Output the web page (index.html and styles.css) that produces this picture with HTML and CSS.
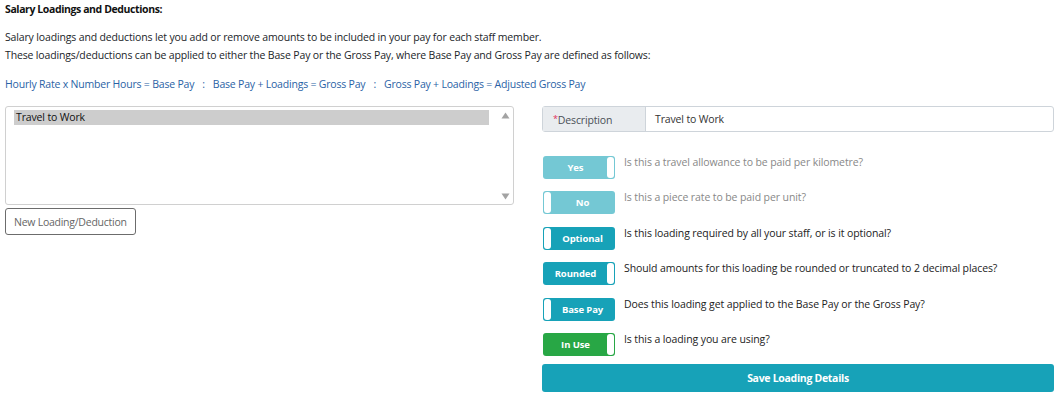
FILE: index.html
```html
<!DOCTYPE html>
<html>
<head>
<meta charset="utf-8">
<link rel="stylesheet" href="styles.css">
</head>
<body>
<div class="page">
  <div class="title">Salary Loadings and Deductions:</div>
  <div class="intro">
    <div>Salary loadings and deductions let you add or remove amounts to be included in your pay for each staff member.</div>
    <div>These loadings/deductions can be applied to either the Base Pay or the Gross Pay, where Base Pay and Gross Pay are defined as follows:</div>
  </div>
  <div class="formula">Hourly Rate x Number Hours = Base Pay<span class="sep">:</span>Base Pay + Loadings = Gross Pay<span class="sep">:</span>Gross Pay + Loadings = Adjusted Gross Pay</div>
  <div class="main">
    <div class="left">
      <div class="listbox">
        <div class="items">
          <div class="item selected">Travel to Work</div>
        </div>
        <div class="scroll">
          <svg width="9" height="7" viewBox="0 0 9 7"><path d="M0.5 6.5 L4.5 0.5 L8.5 6.5 Z" fill="#a3a3a3"/></svg>
          <svg width="9" height="7" viewBox="0 0 9 7"><path d="M0.5 0.5 L4.5 6.5 L8.5 0.5 Z" fill="#a3a3a3"/></svg>
        </div>
      </div>
      <button class="btn-new">New Loading/Deduction</button>
    </div>
    <div class="right">
      <div class="input-group">
        <div class="ig-label"><span class="req">*</span>Description</div>
        <div class="ig-input">Travel to Work</div>
      </div>
      <div class="toggles">
        <div class="row muted">
          <div class="toggle on light"><span class="tlabel">Yes</span><span class="handle"></span></div>
          <div class="q">Is this a travel allowance to be paid per kilometre?</div>
        </div>
        <div class="row muted">
          <div class="toggle off light"><span class="handle"></span><span class="tlabel">No</span></div>
          <div class="q">Is this a piece rate to be paid per unit?</div>
        </div>
        <div class="row">
          <div class="toggle off"><span class="handle"></span><span class="tlabel">Optional</span></div>
          <div class="q">Is this loading required by all your staff, or is it optional?</div>
        </div>
        <div class="row">
          <div class="toggle on"><span class="tlabel">Rounded</span><span class="handle"></span></div>
          <div class="q">Should amounts for this loading be rounded or truncated to 2 decimal places?</div>
        </div>
        <div class="row">
          <div class="toggle off"><span class="handle"></span><span class="tlabel">Base Pay</span></div>
          <div class="q">Does this loading get applied to the Base Pay or the Gross Pay?</div>
        </div>
        <div class="row">
          <div class="toggle on green"><span class="tlabel">In Use</span><span class="handle"></span></div>
          <div class="q">Is this a loading you are using?</div>
        </div>
      </div>
      <button class="btn-save">Save Loading Details</button>
    </div>
  </div>
</div>
</body>
</html>
```
FILE: styles.css
```css
* { box-sizing: border-box; }
body {
  margin: 0;
  background: #fff;
  font-family: "Open Sans", "Noto Sans", sans-serif;
  font-size: 10.5px;
  letter-spacing: -0.15px;
  color: #212529;
}
.page { padding: 0 5px; }
.title {
  font-weight: bold;
  line-height: 18px;
  color: #111;
  letter-spacing: -0.4px;
}
.intro {
  margin-top: 10px;
  line-height: 18px;
}
.formula {
  margin-top: 11px;
  line-height: 18px;
  color: #2a62a5;
  letter-spacing: -0.2px;
}
.formula .sep { margin: 0 8px; }
.main {
  margin-top: 13px;
  display: flex;
  gap: 28px;
}
.left { width: 509px; }
.listbox {
  height: 99px;
  border: 1px solid #d0d0d0;
  border-radius: 3px;
  display: flex;
  padding: 3px 0 3px 8px;
}
.items { flex: 1; }
.item {
  line-height: 15px;
  padding-left: 2px;
  color: #111;
}
.item.selected { background: #cdcdcd; }
.scroll {
  width: 16px;
  margin-left: 8px;
  display: flex;
  flex-direction: column;
  justify-content: space-between;
  align-items: center;
  padding: 2px 0 1px;
}
.btn-new {
  margin-top: 3px;
  height: 27px;
  padding: 0 8px;
  background: #fff;
  border: 1px solid #6c6c6c;
  border-radius: 3px;
  font: inherit;
  color: #666;
  letter-spacing: -0.25px;
}
.right { width: 512px; }
.input-group {
  display: flex;
  height: 26px;
  border: 1px solid #ced4da;
  border-radius: 3px;
}
.ig-label {
  width: 103px;
  background: #e9ecef;
  border-right: 1px solid #ced4da;
  padding-left: 10px;
  line-height: 24px;
  color: #495057;
}
.req { color: #e0305a; font-size: 9px; vertical-align: 2px; }
.ig-input {
  flex: 1;
  padding-left: 9px;
  line-height: 25px;
  color: #333;
}
.toggles {
  margin-top: 24px;
  display: flex;
  flex-direction: column;
  gap: 12.4px;
}
.row {
  display: flex;
  align-items: flex-start;
  height: 23px;
}
.toggle {
  width: 72px;
  height: 23px;
  margin-left: 1px;
  border-radius: 3px;
  background: #17a2b8;
  display: flex;
  align-items: center;
  padding: 1px;
  color: #fff;
  font-weight: bold;
  font-size: 9.5px;
  letter-spacing: -0.1px;
}
.toggle.light { background: #74c8d4; }
.toggle.green { background: #28a745; }
.tlabel { flex: 1; text-align: center; }
.handle {
  width: 7px;
  height: 21px;
  background: #fff;
  border-radius: 3px;
}
.q {
  margin-left: 9px;
  line-height: 16px;
  margin-top: -2px;
  color: #222;
  letter-spacing: -0.1px;
}
.muted .q { color: #888; }
.btn-save {
  margin-top: 8px;
  width: 512px;
  height: 28px;
  border: none;
  border-radius: 3px;
  background: #17a2b8;
  color: #fff;
  font: inherit;
  font-weight: bold;
  letter-spacing: -0.3px;
}
```
